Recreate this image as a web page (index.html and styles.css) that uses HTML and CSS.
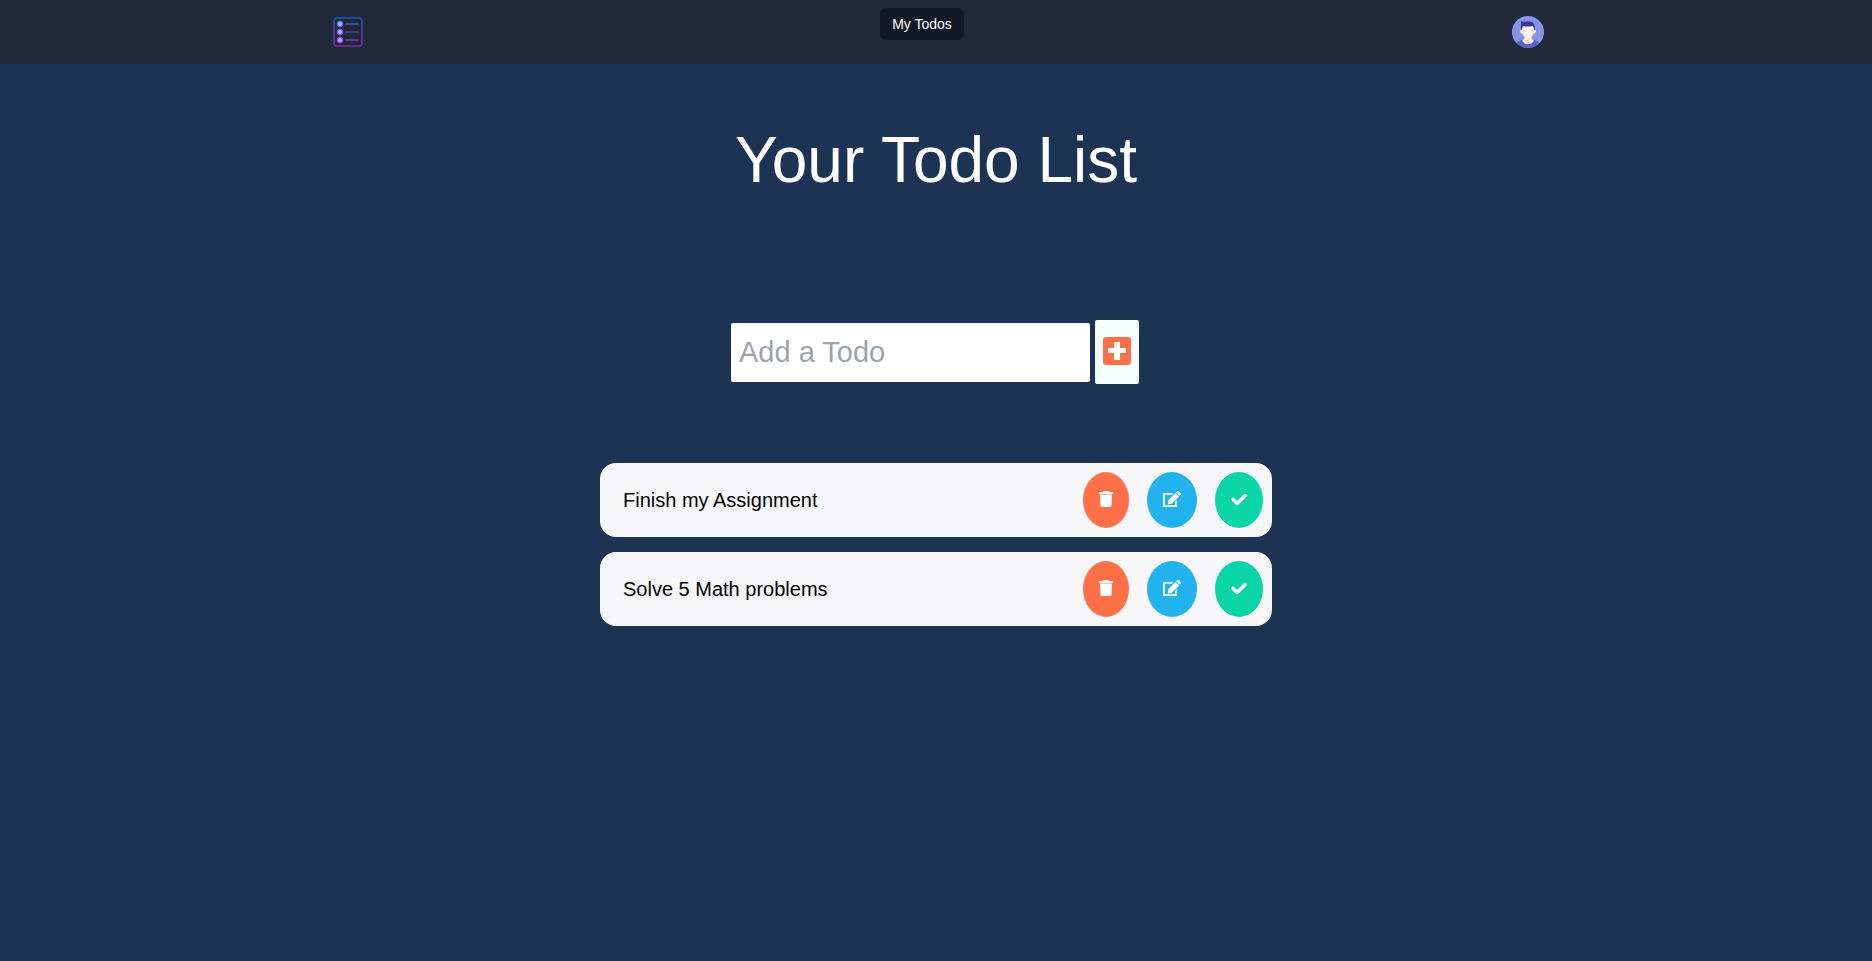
FILE: index.html
```html
<!DOCTYPE html>
<html lang="en">
<head>
<meta charset="utf-8">
<meta name="viewport" content="width=device-width, initial-scale=1">
<title>My Todos</title>
<link rel="stylesheet" href="styles.css">
</head>
<body>
<svg class="sprite" aria-hidden="true">
  <symbol id="trash" viewBox="0 0 14 16">
    <path d="M4 1 4.500 0h5L10 1h4v2H0V1ZM1 3.400h12l-.6 11.600a1 1 0 0 1-1 1H2.600a1 1 0 0 1-1-1Z"/>
  </symbol>
  <symbol id="edit" viewBox="0 0 18 16">
    <path d="M0 2h10.500L8.700 3.800H1.800v10.400h10.400v-3.400L14 9v7H0Z"/>
    <path d="m12.400 2 3.600 3.600-7.200 7.200-4 .6.500-4.200ZM13.200 1.200l.7-.7a1.600 1.600 0 0 1 2.200 0l1.400 1.400a1.600 1.600 0 0 1 0 2.200l-.7.7Z"/>
  </symbol>
  <symbol id="check" viewBox="0 0 16 16">
    <path d="m1.900 8.300 4.200 4.200 8-8" fill="none" stroke="#fff" stroke-width="3.400" stroke-linecap="round" stroke-linejoin="round"/>
  </symbol>
</svg>

<header class="navbar">
  <div class="navbar-inner">
    <a class="brand" href="#" aria-label="Home">
      <svg class="logo" viewBox="0 0 32 32" aria-hidden="true">
        <defs>
          <linearGradient id="frame" gradientUnits="userSpaceOnUse" x1="0" y1="1" x2="0" y2="31">
            <stop offset="0" stop-color="#1a56b8"/>
            <stop offset="1" stop-color="#8b22b4"/>
          </linearGradient>
          <linearGradient id="dots" gradientUnits="userSpaceOnUse" x1="0" y1="5" x2="0" y2="27">
            <stop offset="0" stop-color="#4478f4"/>
            <stop offset="1" stop-color="#a63af0"/>
          </linearGradient>
        </defs>
        <rect x="2" y="2" width="28" height="28" rx="3" fill="none" stroke="url(#frame)" stroke-width="1.600"/>
        <g fill="#b9b4ff" stroke="url(#dots)" stroke-width="1.400">
          <circle cx="8" cy="8" r="2.600"/>
          <circle cx="8" cy="16" r="2.600"/>
          <circle cx="8" cy="24" r="2.600"/>
        </g>
        <g fill="none" stroke-width="1.700" stroke-linecap="round">
          <path d="M14 8h12" stroke="#3b55cb"/>
          <path d="M14 16h12" stroke="#5a3fc0"/>
          <path d="M14 24h12" stroke="#8a2fd0"/>
        </g>
      </svg>
    </a>
    <nav class="nav-links" aria-label="Main">
      <a class="nav-link" href="#" aria-current="page">My Todos</a>
    </nav>
    <button class="avatar" type="button" aria-label="User menu">
      <svg viewBox="0 0 32 32" aria-hidden="true">
        <clipPath id="disc"><circle cx="16" cy="16" r="16"/></clipPath>
        <g clip-path="url(#disc)">
          <path fill="#8b92e6" d="M0 0h32v32H0Z"/>
          <path fill="#5a60cc" d="M3 32c0-6 4-7 8-8.500h10c4 1.500 8 2.500 8 8.500Z"/>
          <path fill="#ffe9df" d="M12.500 19h7v4l2.500 1c-1 3-3.300 4.200-6 4.200S11 27 10 24l2.500-1Z"/>
          <path fill="#fff0e8" d="M10 10h12v4c1.500-.2 2 .6 1.800 1.700-.2 1.300-1 2-2.200 1.900C20.800 20.500 18.600 22 16 22s-4.800-1.500-5.600-4.400c-1.200.1-2-.6-2.200-1.900C8 14.600 8.500 13.800 10 14Z"/>
          <path fill="#343a9c" d="M9.200 5c1.600.8 3 .9 5 .6 4-.6 8.500.2 8.500 4.900V14H22c0-2-.5-3-1.500-4-3 .8-6.500.7-9-.1-1 .8-1.500 2-1.500 4.100h-.6C8.700 11 8.800 8 9.200 5Z"/>
        </g>
      </svg>
    </button>
  </div>
</header>

<main class="page">
  <h1 class="title">Your Todo List</h1>

  <form class="add-form">
    <input class="add-input" type="text" placeholder="Add a Todo" aria-label="Add a Todo">
    <button class="add-button" type="button" aria-label="Add">
      <svg class="add-icon" viewBox="0 0 28 28" aria-hidden="true">
        <rect width="28" height="28" rx="3" fill="#ff7048"/>
        <path fill="#fff" d="M11 5h6v6h6v5h-6v7h-6v-7H5v-5h6Z"/>
      </svg>
    </button>
  </form>

  <ul class="todos">
    <li class="todo">
      <span class="todo-text">Finish my Assignment</span>
      <button class="action delete" type="button" aria-label="Delete"><svg class="icon-trash"><use href="#trash"/></svg></button>
      <button class="action edit" type="button" aria-label="Edit"><svg class="icon-edit"><use href="#edit"/></svg></button>
      <button class="action done" type="button" aria-label="Mark done"><svg class="icon-check"><use href="#check"/></svg></button>
    </li>
    <li class="todo">
      <span class="todo-text">Solve 5 Math problems</span>
      <button class="action delete" type="button" aria-label="Delete"><svg class="icon-trash"><use href="#trash"/></svg></button>
      <button class="action edit" type="button" aria-label="Edit"><svg class="icon-edit"><use href="#edit"/></svg></button>
      <button class="action done" type="button" aria-label="Mark done"><svg class="icon-check"><use href="#check"/></svg></button>
    </li>
  </ul>
</main>
</body>
</html>
```

FILE: styles.css
```css
* {
  box-sizing: border-box;
}

body {
  margin: 0;
  min-height: 100vh;
  background: #1d3354;
  color: #000;
  font-family: "Liberation Sans", Arial, sans-serif;
}

button {
  margin: 0;
  border: 0;
  font: inherit;
  cursor: pointer;
}

svg {
  display: block;
}

.sprite {
  display: none;
}

.navbar {
  background: #1f2937;
}

.navbar-inner {
  display: grid;
  grid-template-columns: 1fr auto 1fr;
  align-items: start;
  max-width: 1280px;
  margin: 0 auto;
  padding: 8px 32px;
}

.brand {
  justify-self: start;
  padding: 8px 4px;
}

.logo {
  width: 32px;
  height: 32px;
}

.nav-links {
  margin-right: 28px;
}

.nav-link {
  display: block;
  padding: 6px 12px;
  border-radius: 6px;
  background: #111827;
  color: #fff;
  font-size: 14px;
  line-height: 20px;
  text-decoration: none;
}

.avatar {
  justify-self: end;
  width: 32px;
  height: 32px;
  margin-top: 8px;
  padding: 0;
  border-radius: 50%;
  background: none;
}

.page {
  display: flex;
  flex-direction: column;
  align-items: center;
  padding: 64px 16px;
}

.title {
  margin: 0 0 128px;
  color: #fff;
  font-size: 64px;
  font-weight: 400;
  line-height: 64px;
}

.add-form {
  display: flex;
  align-items: center;
  gap: 5px;
  max-width: 100%;
  margin: 0 2px 79px 0;
}

.add-input {
  width: 359px;
  min-width: 0;
  height: 59px;
  padding: 0 8px;
  border: 0;
  border-radius: 2px;
  background: #fff;
  font: inherit;
  font-size: 29px;
}

.add-input::placeholder {
  color: #9ca3af;
}

.add-button {
  height: 64px;
  padding: 0 8px 2px;
  border-radius: 2px;
  background: #f5ffff;
}

.add-icon {
  width: 28px;
  height: 28px;
}

.todos {
  display: grid;
  gap: 15px;
  width: 100%;
  max-width: 672px;
  margin: 0;
  padding: 0;
  list-style: none;
}

.todo {
  display: flex;
  align-items: center;
  gap: 18px;
  padding: 9px 9px 9px 23px;
  border-radius: 16px;
  background: #f7f7fa;
}

.todo-text {
  flex: 1;
  font-size: 20px;
  line-height: 28px;
}

.action {
  height: 56px;
  padding: 0 16px 2px;
  border-radius: 50%;
}

.action svg {
  height: 16px;
  fill: #fff;
}

.delete {
  background: #ff7048;
}

.edit {
  background: #22b3ee;
}

.done {
  background: #0ad5a6;
}

.icon-trash {
  width: 14px;
}

.icon-edit {
  width: 18px;
}

.icon-check {
  width: 16px;
}
```
